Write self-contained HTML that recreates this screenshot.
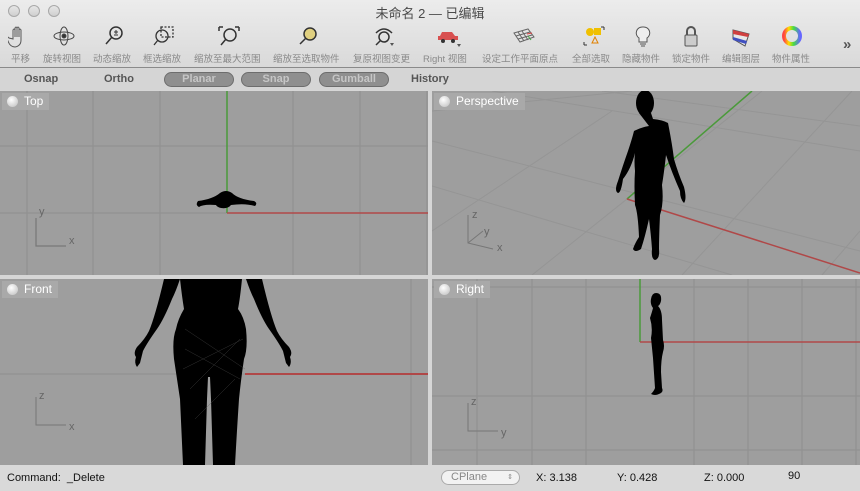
<!DOCTYPE html>
<html><head><meta charset="utf-8"><style>
*{margin:0;padding:0;box-sizing:border-box}
body{width:860px;height:491px;overflow:hidden;background:#d6d6d6;font-family:"Liberation Sans","Noto Sans CJK SC",sans-serif;position:relative}
.tb{position:absolute;left:0;top:0;width:860px;height:68px;background:linear-gradient(#ececec,#d9d9d9);border-bottom:1px solid #8a8a8a}
.title{position:absolute;top:3px;left:0;width:860px;text-align:center;font-size:13px;color:#4a4a4a}
.lt{position:absolute;top:5px;width:12px;height:12px;border-radius:50%;border:1px solid #a8a8a8;background:linear-gradient(#e6e6e6,#cfcfcf)}
.lab{position:absolute;top:51px;font-size:9.5px;color:#8a8a8a;white-space:nowrap}
.ic{position:absolute;top:25px}
.bar{position:absolute;top:69px;left:0;width:860px;height:21px;background:#d5d5d5}
.bt{position:absolute;top:4px;font-size:11px;font-weight:bold;color:#555}
.pill{position:absolute;top:3px;height:15px;border-radius:8px;background:#8f8f8f;border:1px solid #6d6d6d;color:#c6c6c6;font-size:11px;font-weight:bold;text-align:center;line-height:13px}
.vp{position:absolute;background:#9e9e9e;overflow:hidden}
.tag{position:absolute;left:2px;top:2px;height:17px;background:#a9a9a9;color:#fff;font-size:12px;padding:1px 6px 0 22px;line-height:15px}
.tag:before{content:"";position:absolute;left:5px;top:3px;width:11px;height:11px;border-radius:50%;background:radial-gradient(circle at 40% 35%,#fff,#bbb)}
.st{position:absolute;top:465px;left:0;width:860px;height:26px;background:#d9d9d9;font-size:11px;color:#111}
</style></head><body>
<div class="tb">
<div class="lt" style="left:8px"></div><div class="lt" style="left:28px"></div><div class="lt" style="left:48px"></div>
<div class="title">未命名 2 — 已编辑</div>
<svg class="ic" style="left:8px" width="20" height="24" viewBox="0 0 20 24" fill="none" stroke="#555" stroke-width="1"><path d="M5 14V5q1-2 2 0v7V3q1-2 2 0v9V3q1-2 2 0v9V5q1-2 2 0v10q0 6-6 7q-5 0-7-6l-2-4q1-1 3 1z"/></svg>
<svg class="ic" style="left:52px" width="24" height="22" fill="none" stroke="#444"><ellipse cx="12" cy="11" rx="10" ry="4"/><ellipse cx="12" cy="11" rx="4" ry="9"/><circle cx="12" cy="11" r="2" fill="#333"/></svg>
<svg class="ic" style="left:104px" width="20" height="22" fill="none" stroke="#333" stroke-width="1.5"><circle cx="12" cy="8" r="6"/><path d="M8 12L2 19"/><path d="M10 7h4M12 5v4M10 10h4" stroke-width="1"/></svg>
<svg class="ic" style="left:152px" width="24" height="22" fill="none" stroke="#333" stroke-width="1.3"><rect x="9" y="2" width="12" height="10" stroke-dasharray="2 1.5"/><circle cx="10" cy="11" r="6"/><path d="M6 15L2 20"/></svg>
<svg class="ic" style="left:217px" width="24" height="22" fill="none" stroke="#333" stroke-width="1.5"><circle cx="13" cy="10" r="6"/><path d="M9 14L4 20M2 2h4M2 2v4M22 2h-4M22 2v4"/></svg>
<svg class="ic" style="left:298px" width="20" height="22" fill="none" stroke="#333" stroke-width="1.5"><circle cx="12" cy="9" r="6" fill="#e0d080"/><path d="M8 13L2 19"/></svg>
<svg class="ic" style="left:372px" width="24" height="22" fill="none" stroke="#333" stroke-width="1.5"><circle cx="12" cy="12" r="5"/><path d="M8 16L4 20M4 8q8-8 16 0"/><path d="M18 18l2 3 2-3z" fill="#555" stroke="none"/></svg>
<svg class="ic" style="left:435px" width="26" height="22"><path d="M3 11h20v4H3z M7 7h10l3 4H5z" fill="#d85050"/><circle cx="8" cy="16" r="2" fill="#333"/><circle cx="18" cy="16" r="2" fill="#333"/><path d="M22 19l2 3 2-3z" fill="#555"/></svg>
<svg class="ic" style="left:510px" width="26" height="22" fill="none" stroke="#666"><path d="M4 8l14-4 6 8-14 5z"/><path d="M8 7l6 9M12 6l6 9M6 11l14-4M8 14l14-4"/><path d="M17 9l5-1" stroke="#d44"/><path d="M18 11l3 4" stroke="#4a4"/></svg>
<svg class="ic" style="left:582px" width="26" height="22"><circle cx="8" cy="7" r="4" fill="#f0c000"/><rect x="12" y="3" width="7" height="7" fill="#f0c000"/><path d="M10 18l3-6 3 6z" fill="none" stroke="#e08000"/><path d="M2 20v-3M2 20h3M22 2h-3M22 2v3" stroke="#333" fill="none"/></svg>
<svg class="ic" style="left:633px" width="22" height="24" fill="none" stroke="#555"><path d="M10 2a6 6 0 0 1 4 11v4h-8v-4a6 6 0 0 1 4-11z" fill="#eee"/><path d="M7 19h6M8 21h4"/></svg>
<svg class="ic" style="left:680px" width="22" height="24"><path d="M7 10V6a4 4 0 0 1 8 0v4" fill="none" stroke="#555" stroke-width="2"/><rect x="5" y="10" width="12" height="11" rx="1" fill="#ccc" stroke="#555"/></svg>
<svg class="ic" style="left:730px" width="24" height="24"><path d="M3 5l16 4-4 12L3 14z" fill="#e8e8e8" stroke="#555"/><path d="M3 5l16 4-1 3L3 9z" fill="#d04040"/><path d="M3 12l14 4-1 3L3 15z" fill="#4050c0"/></svg>
<svg class="ic" style="left:781px" width="24" height="24"><defs><linearGradient id="g"><stop offset="0" stop-color="#f44"/><stop offset=".3" stop-color="#fd0"/><stop offset=".6" stop-color="#4d4"/><stop offset="1" stop-color="#66f"/></linearGradient></defs><circle cx="11" cy="11" r="8" fill="none" stroke="url(#g)" stroke-width="4"/></svg>
<div style="position:absolute;left:843px;top:36px;font-size:15px;color:#555;font-weight:bold">»</div>
<div class="lab" style="left:11px">平移</div><div class="lab" style="left:43px">旋转视图</div><div class="lab" style="left:93px">动态缩放</div><div class="lab" style="left:143px">框选缩放</div><div class="lab" style="left:194px">缩放至最大范围</div><div class="lab" style="left:273px">缩放至选取物件</div><div class="lab" style="left:353px">复原视图变更</div><div class="lab" style="left:423px">Right 视图</div><div class="lab" style="left:482px">设定工作平面原点</div><div class="lab" style="left:572px">全部选取</div><div class="lab" style="left:622px">隐藏物件</div><div class="lab" style="left:672px">锁定物件</div><div class="lab" style="left:722px">编辑图层</div><div class="lab" style="left:772px">物件属性</div>
</div>
<div class="bar">
<div class="bt" style="left:24px">Osnap</div><div class="bt" style="left:104px">Ortho</div>
<div class="pill" style="left:164px;width:70px">Planar</div><div class="pill" style="left:241px;width:70px">Snap</div><div class="pill" style="left:319px;width:70px">Gumball</div>
<div class="bt" style="left:411px">History</div>
</div>

<div class="vp" style="left:0;top:91px;width:428px;height:184px">
<svg width="428" height="184" style="position:absolute;left:0;top:0">
<g stroke="#8f8f8f"><path d="M27 0v184M93 0v184M160 0v184M293 0v184M360 0v184M427 0v184M0 55h428M0 122h428"/></g>
<path d="M227 0v122" stroke="#4a9a3a" stroke-width="1.5"/><path d="M227 122h201" stroke="#b04848" stroke-width="1.5"/>
<path d="M36 127v28h30" stroke="#777" fill="none" stroke-width="1.2"/>
<text x="39" y="124" font-size="11" fill="#666" font-family="Liberation Sans">y</text><text x="69" y="153" font-size="11" fill="#666" font-family="Liberation Sans">x</text>
<path d="M198 110q15-2 22-8q6-4 12 0q6 6 22 8q4 2 1 5q-10-3-24-1q-3 4-10 3q-4-1-5-3q-13-1-17 2q-4-2-1-6z" fill="#000"/>
</svg><div class="tag">Top</div></div>

<div class="vp" style="left:432px;top:91px;width:428px;height:184px">
<svg width="428" height="184" style="position:absolute;left:0;top:0">
<g stroke="#959595" fill="none"><path d="M0 50L428 160M0 95L300 184M60 0L428 60M170 0L428 35M0 20L200 0M0 140L180 20M100 184L330 0M250 184L420 0M390 184L428 140"/></g>
<path d="M195 108L320 0" stroke="#4a9a3a" stroke-width="1.5"/><path d="M195 108L428 182" stroke="#b04848" stroke-width="1.5"/>
<path d="M36 124v28l25 6M36 152l15-12" stroke="#777" fill="none"/>
<text x="40" y="127" font-size="11" fill="#666">z</text><text x="52" y="144" font-size="11" fill="#666">y</text><text x="65" y="160" font-size="11" fill="#666">x</text>
<ellipse cx="213" cy="12" rx="9" ry="13" fill="#000"/>
<path d="M207 22h12l2 6q10 1 15 4q4 20 6 36q4 14 10 28q3 12 0 16q-4-4-4-12q-8-18-14-36q-2 18-4 30q2 18-2 30q-1 22-1 34q1 10-4 11q-4-1-3-11q-1-14-3-30q-4 18-8 30q-6 4-8 0q2-6 6-12q-1-24-4-32q-1-20 0-34q-1-10 0-18q-4 16-12 26q-2 14-5 14q-4-2 0-12q5-16 10-30q4-12 6-20q8-4 15-5z" fill="#000"/>
</svg><div class="tag">Perspective</div></div>

<div class="vp" style="left:0;top:279px;width:428px;height:186px">
<svg width="428" height="186" style="position:absolute;left:0;top:0">
<g stroke="#8f8f8f"><path d="M411 0v186M0 95h428"/></g>
<path d="M245 95h183" stroke="#b04848" stroke-width="2"/>
<path d="M36 118v28h30" stroke="#777" fill="none"/>
<text x="39" y="120" font-size="11" fill="#666">z</text><text x="69" y="151" font-size="11" fill="#666">x</text>
<path d="M164 0h16q-4 12-8 20q-8 20-15 30q-10 14-14 22l-3 12l-3 4q-3-4-1-10q-3-4 1-10q8-8 12-16q6-14 15-52z" fill="#000"/>
<path d="M262 0h-16q4 12 8 20q8 20 15 30q10 14 14 22l3 12l3 4q3-4 1-10q3-4-1-10q-8-8-12-16q-6-14-15-52z" fill="#000"/>
<path d="M186 0h56q-2 20-4 30q6 8 8 20q2 20-2 30q-3 20-5 40q-2 30-4 66h-22l-2-66l-1-22h-2l-1 22l-2 66h-22l-3-66q-3-20-6-40q-2-20 2-30q2-10 8-20q-2-12-4-30z" fill="#000"/>
<g stroke="#555" stroke-width=".5" opacity=".6"><path d="M185 50l60 40M185 70l55 30M190 110l50-50M195 140l40-40M183 90l60-30"/></g>
</svg><div class="tag">Front</div></div>

<div class="vp" style="left:432px;top:279px;width:428px;height:186px">
<svg width="428" height="186" style="position:absolute;left:0;top:0">
<g stroke="#8f8f8f"><path d="M45 0v186M100 0v186M154 0v186M262 0v186M316 0v186M370 0v186M424 0v186M0 117h428M0 171h428M0 8h428"/></g>
<path d="M208 0v63" stroke="#4a9a3a" stroke-width="1.5"/><path d="M208 63h220" stroke="#b04848" stroke-width="1.5"/>
<path d="M36 124v28h30" stroke="#777" fill="none"/>
<text x="39" y="126" font-size="11" fill="#666">z</text><text x="69" y="157" font-size="11" fill="#666">y</text>
<path d="M224 14q6 0 5 8q-1 4-3 5q4 4 4 14l1 20q2 6 0 12q-2 8-2 20l1 16q2 4-3 6q-4 2-8 0q3-3 4-6q-1-15-2-30l-2-20q2-10-1-20q2-6 3-10q-3-4-2-9q1-6 5-6z" fill="#000"/>
</svg><div class="tag">Right</div></div>

<div class="st">
<div style="position:absolute;left:7px;top:7px">Command:&nbsp; _Delete</div>
<div style="position:absolute;left:441px;top:5px;width:79px;height:15px;border:1px solid #aaa;border-radius:8px;background:#f2f2f2;color:#888;font-size:11px;padding-left:9px;line-height:13px">CPlane<span style="position:absolute;right:6px;top:0;font-size:7px">⇕</span></div>
<div style="position:absolute;left:536px;top:7px">X: 3.138</div>
<div style="position:absolute;left:617px;top:7px">Y: 0.428</div>
<div style="position:absolute;left:704px;top:7px">Z: 0.000</div>
<div style="position:absolute;left:788px;top:5px">90</div>
</div>
</body></html>
